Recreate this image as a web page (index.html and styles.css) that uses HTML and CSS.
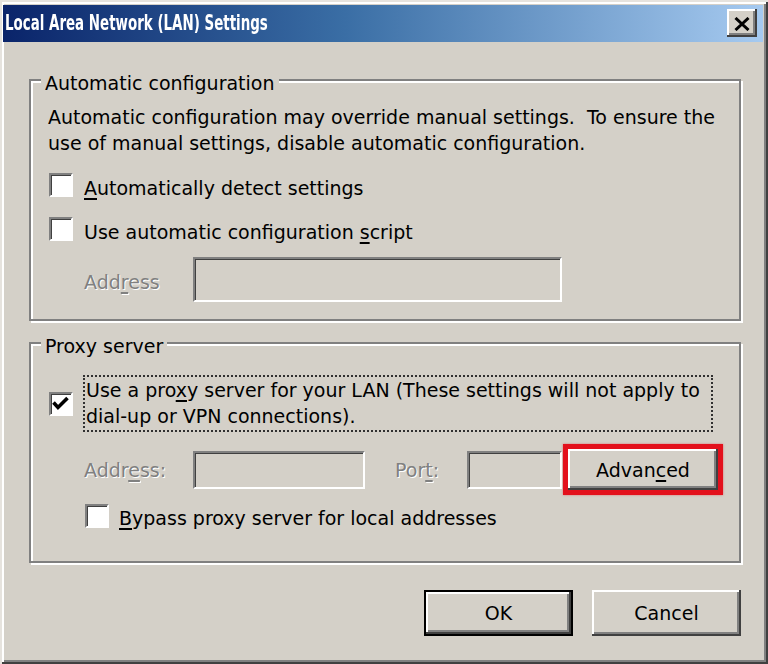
FILE: index.html
```html
<!DOCTYPE html>
<html lang="en">
<head>
<meta charset="utf-8">
<title>Local Area Network (LAN) Settings</title>
<link rel="stylesheet" href="styles.css">
</head>
<body>
<div class="window">
  <div class="titlebar">
    <span class="title">Local Area Network (LAN) Settings</span>
    <button class="close" aria-label="Close">
      <svg width="16" height="14" viewBox="0 0 16 14"><path d="M1.5 1 L14.5 13 M14.5 1 L1.5 13" stroke="#000" stroke-width="3" fill="none"/></svg>
    </button>
  </div>
  <div class="client">
    <fieldset class="group group-auto">
      <legend>Automatic configuration</legend>
      <p class="desc">Automatic configuration may override manual settings.&nbsp; To ensure the<br>use of manual settings, disable automatic configuration.</p>
      <div class="check row1">
        <span class="box"></span>
        <span class="label"><u>A</u>utomatically detect settings</span>
      </div>
      <div class="check row2">
        <span class="box"></span>
        <span class="label">Use automatic configuration <u>s</u>cript</span>
      </div>
      <div class="field-row auto-addr">
        <span class="disabled lbl">Add<u>r</u>ess</span>
        <span class="field field-wide"></span>
      </div>
    </fieldset>

    <fieldset class="group group-proxy">
      <legend>Proxy server</legend>
      <div class="proxy-check">
        <span class="box">
          <svg width="20" height="20" viewBox="0 0 20 20"><polyline points="2.5,8.5 7,13.5 16.5,4" stroke="#000" stroke-width="3.6" fill="none"/></svg>
        </span>
        <span class="focus">Use a pro<u>x</u>y server for your LAN (These settings will not apply to<br>dial-up or VPN connections).</span>
      </div>
      <div class="field-row proxy-row">
        <span class="disabled lbl">Addr<u>e</u>ss:</span>
        <span class="field field-addr"></span>
        <span class="disabled lbl-port">Por<u>t</u>:</span>
        <span class="field field-port"></span>
        <span class="highlight"><button class="btn adv">Advan<u>c</u>ed</button></span>
      </div>
      <div class="check bypass">
        <span class="box"></span>
        <span class="label"><u>B</u>ypass proxy server for local addresses</span>
      </div>
    </fieldset>

    <div class="buttons">
      <button class="btn btn-default">OK</button>
      <button class="btn">Cancel</button>
    </div>
  </div>
</div>
</body>
</html>
```

FILE: styles.css
```css
* { box-sizing: border-box; }
html, body { margin: 0; padding: 0; }
body {
  width: 768px;
  height: 664px;
  overflow: hidden;
  background: #d4d0c8;
  font-family: "DejaVu Sans", Verdana, sans-serif;
  font-size: 19px;
  color: #000;
}
u { text-decoration-thickness: 2px; text-underline-offset: 3px; }

.window {
  width: 768px;
  height: 664px;
  padding: 5px 5px 4px 3px;
  background: #d4d0c8;
  box-shadow: inset 2px 2px 0 #e6e3de, inset -2px -2px 0 #404040, inset 4px 4px 0 #fff, inset -4px -4px 0 #808080;
  display: flex;
  flex-direction: column;
}

.titlebar {
  height: 37px;
  background: linear-gradient(to right, #0a246a 0%, #3a6ea5 45%, #a6caf0 100%);
  display: flex;
  align-items: flex-start;
  padding-left: 2px;
}
.title {
  color: #fff;
  font-family: "DejaVu Sans Condensed", "DejaVu Sans", sans-serif;
  font-weight: bold;
  font-size: 21px;
  line-height: 37px;
  white-space: nowrap;
  transform: scaleX(0.71);
  transform-origin: left center;
}
.close {
  margin: 4px 6px 0 auto;
  width: 30px;
  height: 28px;
  padding: 0;
  border: none;
  background: #d4d0c8;
  display: flex;
  align-items: center;
  justify-content: center;
  box-shadow: inset -2px -2px 0 #404040, inset 2px 2px 0 #fff, inset -4px -4px 0 #808080;
}
.close svg { display: block; margin-top: 1px; }

.client {
  flex: 1;
  padding: 0 22px 0 26px;
  display: flex;
  flex-direction: column;
}

.group {
  margin: 0;
  padding: 0;
  min-width: 0;
  border: 2px solid #808080;
  box-shadow: inset 2px 2px 0 #fff, 2px 2px 0 #fff;
}
.group legend {
  margin-left: 10px;
  padding: 6px 4px 0;
  line-height: 26px;
  background: #d4d0c8;
}
.group-auto { margin-top: 22px; height: 257px; }
.group-proxy { margin-top: 6px; height: 236px; }

.desc {
  margin: 8px 0 0 17px;
  line-height: 26px;
  white-space: nowrap;
}

.check {
  display: flex;
  align-items: flex-start;
  margin-left: 18px;
}
.check .label { line-height: 26px; margin-left: 11px; margin-top: 2px; white-space: nowrap; }
.row1 { margin-top: 17px; }
.row2 { margin-top: 16px; }

.box {
  width: 24px;
  height: 24px;
  flex: none;
  background: #fff;
  border: 2px solid;
  border-color: #808080 #fff #fff #808080;
  box-shadow: inset 1px 1px 0 #404040;
}
.box svg { display: block; }

.field-row { display: flex; align-items: center; margin-left: 53px; }
.disabled {
  color: #808080;
  text-shadow: 1px 1px 0 #fff;
  line-height: 26px;
  white-space: nowrap;
}
.lbl { width: 109px; flex: none; }
.auto-addr { margin-top: 12px; }
.auto-addr .lbl { padding-top: 4px; }

.field {
  flex: none;
  background: #d4d0c8;
  border: 2px solid;
  border-color: #808080 #fff #fff #808080;
  box-shadow: inset 1px 1px 0 #404040;
}
.field-wide { width: 369px; height: 45px; }
.field-addr { width: 172px; height: 38px; }
.field-port { width: 95px; height: 38px; }
.lbl-port { width: 72px; flex: none; margin-left: 30px; }

.proxy-check {
  display: flex;
  align-items: center;
  margin: 16px 0 0 18px;
}
.focus {
  margin-left: 10px;
  width: 630px;
  border: 2px dotted #303030;
  padding: 0 0 1px 1px;
  line-height: 26px;
  white-space: nowrap;
}

.proxy-row { margin-top: 12px; }
.highlight {
  margin-left: 1px;
  border: 5px solid #e3101c;
  box-shadow: 0 0 2px rgba(227, 16, 28, 0.5);
  display: block;
}

.btn {
  font-family: inherit;
  font-size: 19px;
  color: #000;
  background: #d4d0c8;
  border: none;
  padding: 0;
  box-shadow: inset -2px -2px 0 #404040, inset 2px 2px 0 #fff, inset -4px -4px 0 #808080;
  display: block;
}
.adv { width: 150px; height: 41px; }

.bypass { margin: 9px 0 0 54px; }
.bypass .label { margin-left: 10px; margin-top: 1px; }

.buttons {
  margin-top: 27px;
  display: flex;
  justify-content: flex-end;
  gap: 19px;
}
.buttons .btn { width: 149px; height: 46px; }
.btn-default {
  box-shadow: inset 0 0 0 2px #000, inset -4px -4px 0 #404040, inset 4px 4px 0 #fff, inset -6px -6px 0 #808080;
}
```
